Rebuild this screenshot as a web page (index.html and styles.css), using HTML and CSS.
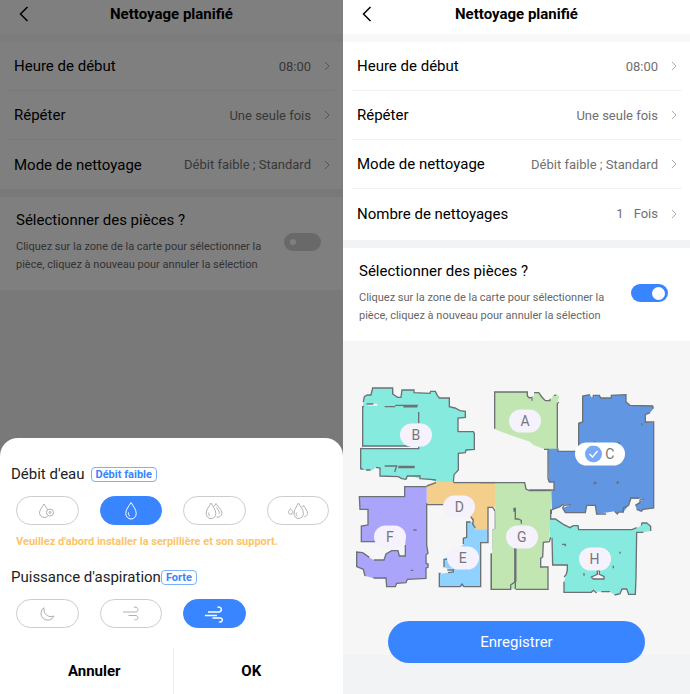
FILE: index.html
```html
<!DOCTYPE html>
<html lang="fr">
<head>
  <meta charset="UTF-8">
  <meta name="viewport" content="width=device-width, initial-scale=1.0">
  <title>Nettoyage planifié</title>
  <link rel="stylesheet" href="styles.css">
</head>
<body>

  <div class="screens">

    <!-- Schedule with the cleaning mode sheet open -->
    <section class="phone">
      <header class="topbar">
        <button class="back" aria-label="Retour">
          <svg width="10" height="16" viewBox="0 0 10 16"><path d="M8.500 1 1.500 8l7 7"/></svg>
        </button>
        <h1>Nettoyage planifié</h1>
      </header>

      <div class="list">
        <button class="row"><span class="name">Heure de début</span><span class="value">08:00</span><svg class="chevron" width="6" height="10" viewBox="0 0 6 10"><path d="m1 1 4 4-4 4"/></svg></button>
        <button class="row"><span class="name">Répéter</span><span class="value">Une seule fois</span><svg class="chevron" width="6" height="10" viewBox="0 0 6 10"><path d="m1 1 4 4-4 4"/></svg></button>
        <button class="row"><span class="name">Mode de nettoyage</span><span class="value">Débit faible ; Standard</span><svg class="chevron" width="6" height="10" viewBox="0 0 6 10"><path d="m1 1 4 4-4 4"/></svg></button>
      </div>

      <div class="select-rooms">
        <div class="select-text">
          <label for="rooms-off">Sélectionner des pièces ?</label>
          <p>Cliquez sur la zone de la carte pour sélectionner la pièce, cliquez à nouveau pour annuler la sélection</p>
        </div>
        <input type="checkbox" class="toggle" id="rooms-off">
      </div>

      <div class="overlay">
        <form class="sheet">
          <div class="sheet-title"><h2>Débit d'eau</h2><span class="badge spaced">Débit faible</span></div>
          <div class="options">
            <label class="option">
              <input type="radio" name="water" aria-label="Sans eau">
              <svg width="24" height="24" viewBox="0 0 24 24"><path d="M12.500 17.500A5 5 0 0 1 4.500 14c0-3 2.500-5.500 4.500-9 1.500 2.500 2.800 4.200 3.700 6"/><circle cx="15" cy="13.500" r="3.500"/><circle cx="15" cy="13.500" r="1"/></svg>
            </label>
            <label class="option">
              <input type="radio" name="water" aria-label="Débit faible" checked>
              <svg width="24" height="24" viewBox="0 0 24 24"><path d="M12 3.500c-2.500 4.200-5.200 7-5.200 11a5.200 5.500 0 0 0 10.400 0c0-4-2.700-6.800-5.200-11Z"/><path d="M9.500 13.500c-.3 1.800.2 3 1.500 3.800"/></svg>
            </label>
            <label class="option">
              <input type="radio" name="water" aria-label="Débit moyen">
              <svg width="24" height="24" viewBox="0 0 24 24"><path d="M9 4c-2 3.800-4.800 6.500-4.800 10.500a4.800 5.200 0 0 0 9.600 0C13.800 10.500 11 7.800 9 4Z"/><path d="M6.800 13.500c-.3 1.800.2 3 1.200 3.800M12 7.500 14 4.500c2 3.500 6 6.500 6 9.700a4.500 4.500 0 0 1-5.500 4M14.500 8.500c1.800 2.500 3 4 2.800 6.500"/></svg>
            </label>
            <label class="option">
              <input type="radio" name="water" aria-label="Débit fort">
              <svg width="24" height="24" viewBox="0 0 24 24"><path d="M12.500 4C10.500 7.800 8 10.500 8 14.500a4.700 5 0 0 0 9.400 0C17.400 10.500 14.500 7.800 12.500 4Z"/><path d="M10.300 13.500c-.3 1.800.2 3 1.200 3.800M4.500 9.500C3.500 11.200 2.500 12 2.500 13.500a2.200 2.200 0 0 0 4.300 0c0-1.500-1.200-2.500-2.300-4ZM16.500 8 17.500 6.500c1.600 2.800 4 5 4 7.700 0 2-1.500 3.300-3.200 3.300"/></svg>
            </label>
          </div>
          <p class="warning">Veuillez d'abord installer la serpillière et son support.</p>

          <div class="sheet-title"><h2>Puissance d'aspiration</h2><span class="badge">Forte</span></div>
          <div class="options">
            <label class="option">
              <input type="radio" name="power" aria-label="Silencieux">
              <svg width="24" height="24" viewBox="0 0 24 24"><path d="M9 5.700A6.800 6.800 0 1 0 19 14C13.500 16 8 12.500 9 5.700Z"/></svg>
            </label>
            <label class="option">
              <input type="radio" name="power" aria-label="Standard">
              <svg width="24" height="24" viewBox="0 0 24 24"><path d="M4 10h13a2.500 2.500 0 1 0-2-4.500M9.500 13.500H17a2.200 2.200 0 1 1-1.500 4"/></svg>
            </label>
            <label class="option strong">
              <input type="radio" name="power" aria-label="Forte" checked>
              <svg width="24" height="24" viewBox="0 0 24 24"><path d="M6 10h11.500a2.500 2.500 0 1 0-2-4.500M3 13.500h12M10.500 16h8a2 2 0 1 1-1.500 3.500"/></svg>
            </label>
          </div>

          <div class="actions">
            <button type="button">Annuler</button>
            <button type="button">OK</button>
          </div>
        </form>
      </div>
    </section>

    <!-- Schedule with room selection on -->
    <section class="phone">
      <header class="topbar">
        <button class="back" aria-label="Retour">
          <svg width="10" height="16" viewBox="0 0 10 16"><path d="M8.500 1 1.500 8l7 7"/></svg>
        </button>
        <h1>Nettoyage planifié</h1>
      </header>

      <div class="list full">
        <button class="row"><span class="name">Heure de début</span><span class="value">08:00</span><svg class="chevron" width="6" height="10" viewBox="0 0 6 10"><path d="m1 1 4 4-4 4"/></svg></button>
        <button class="row"><span class="name">Répéter</span><span class="value">Une seule fois</span><svg class="chevron" width="6" height="10" viewBox="0 0 6 10"><path d="m1 1 4 4-4 4"/></svg></button>
        <button class="row"><span class="name">Mode de nettoyage</span><span class="value">Débit faible ; Standard</span><svg class="chevron" width="6" height="10" viewBox="0 0 6 10"><path d="m1 1 4 4-4 4"/></svg></button>
        <button class="row"><span class="name">Nombre de nettoyages</span><span class="value count"><span>1</span><span>Fois</span></span><svg class="chevron" width="6" height="10" viewBox="0 0 6 10"><path d="m1 1 4 4-4 4"/></svg></button>
      </div>

      <div class="select-rooms">
        <div class="select-text">
          <label for="rooms-on">Sélectionner des pièces ?</label>
          <p>Cliquez sur la zone de la carte pour sélectionner la pièce, cliquez à nouveau pour annuler la sélection</p>
        </div>
        <input type="checkbox" class="toggle" id="rooms-on" checked>
      </div>

      <div class="map-area">
        <div class="map">
          <svg class="plan" viewBox="0 0 1041 636" aria-hidden="true">
            <!-- room B -->
            <g transform="translate(21 -18)">
              <path fill="#87eadf" d="M40 65 43 50 52 45H63L68 24H128L132 42 143 52H153L156 30H192V38L240 40 242 34H256L262 46 268 54H298V80L315 84 330 92 346 94V112L324 114V155H370L373 160V208L348 210 346 218 325 220V270L312 284 310 306H258L240 298 210 296 190 290 172 288 168 298 155 296 145 290 90 288V266L78 262 68 270H32V205L38 198V80Z"/>
              <path class="gap" d="M38 202H206M52 74H82"/>
              <path class="wall" d="M40 66 43 50 52 45H63L68 24H128V42L143 52H153L156 30H192V38L240 40 242 34H256L262 46 268 54H298V80L315 84 330 92 346 94V112L324 114V155H370L373 160V208L348 210 346 218 325 220V270L312 284 310 306M258 300 240 298 210 296V288H172L168 298 155 296 145 290 90 288V264L78 262M48 270H62M40 268 32 266V206H206V200M42 80H38V198H180M206 96V130M104 80H136M50 72H70M104 258H140L134 276M136 76H204"/>
              <path class="wall thick" d="M160 79H202M145 261H194"/>
            </g>
            <!-- rooms D, E, F -->
            <g transform="translate(21 252)">
              <path fill="#f4cf8b" d="M230 48 258 35H436V112H414V178H376L362 140 340 104H230Z"/>
              <path fill="#8fd2ff" d="M350 156H372L376 178H414V218L392 220V350H268V312L308 306V296H292L282 290V268L340 224V205L350 202Z"/>
              <path fill="#aaa4fb" d="M164 50H230V225L234 250 228 255 230 280 236 282 234 292 228 294V325L172 328 168 338 140 340 136 350H110L108 326 70 324 45 318 40 298 20 290V246L38 248 60 264 72 270H102L108 252 125 242H144L148 258H166V210L78 215H34V168L54 165V120L30 118 28 80H164Z"/>
              <path class="wall" d="M230 104H284M310 38H450M230 48 258 38M362 140 370 150 368 162 376 174M414 178V112H428L436 124V180H430V240M424 250V358H450M340 222V205L350 202V156H362M300 268H282V292M292 300H310V306L294 308M272 310H268V350H330L336 342 342 350H392V218H414V112"/>
              <path class="wall" d="M230 50H164V80H28L30 118H54V165L34 168V215H78M166 225V258H148L144 242H125L108 252 102 270H72M58 262 38 248 20 246V290L40 298 45 318M70 324H108L110 350H136L140 340 168 338 172 328 228 325V294L234 292V282L228 280V255L234 250 230 225V100M190 180H200M182 301H190"/>
            </g>
            <!-- room G -->
            <g transform="translate(411 267)">
              <path fill="#c1e6b1" d="M45 23H134L138 42 148 47 214 49V104L208 188 204 200 190 202 188 246 182 250V276L204 280V343H34V240L38 224V164L46 162Z"/>
              <path class="wall" d="M0 23H134L138 42 148 47H214M212 186 208 200 190 202 188 246 182 250V276H204V343H108M94 343H34V236M106 98V132H114L124 136V146M106 214V320L92 330V343M102 98V110M106 320V343"/>
              <path class="wall thick" d="M106 216V320"/>
              <!-- room H -->
              <path fill="#87eadf" d="M210 132H226L250 148 270 158 280 152H294L296 164H456L470 158 484 152 486 144H500L512 154V168L490 172 470 174 468 308 466 358H446L440 342H426L420 356 404 360 390 350H350L338 346 334 352H252V320L258 300 262 272 218 270 216 188 210 186Z"/>
              <path class="island" d="M334 306 352 298V286H358V298L372 304V312H340Z"/>
              <path class="wall" d="M212 104V132H226L250 148 270 158 280 152H294L296 164H456L470 158M484 152 486 144H500L512 154V168M490 172H470L468 308 466 358H446L440 342H426L420 356 404 360M390 350H364M350 354 340 346 334 352H252V320M252 306 258 300 262 286V270H218L216 188M246 208H256V214M312 294V302M400 272V280M420 230V236"/>
            </g>
            <!-- rooms A, C -->
            <g transform="translate(411 -18)">
              <path fill="#c1e6b1" d="M44 36H142L146 50 158 62 162 40 180 38 195 60 210 62 220 46 230 42 238 50 232 66 234 208H195L160 195 150 185 90 165 44 148Z"/>
              <path class="wall" d="M44 146V36H142V48L148 54 156 52V62M162 38H176L186 52 196 62H210V56M222 46H228M236 66 232 72V206"/>
              <path fill="#6096e2" d="M204 206H234V214H296V130L308 126V48L330 44 334 52 358 44 362 54H394V46L438 44V66L450 76 518 78 520 86 510 98 496 104V126L521 128V384L490 388 484 394 470 388 466 376 492 356H455L446 376 430 396 416 394 412 402 404 394 350 402 346 376H320L316 398H256L248 384 272 374H250L240 380 216 390 214 334 222 330V306H206Z"/>
              <path class="wall" d="M192 208H204V296L208 306H222V330H148M234 206V214H296V130L308 126V48L330 44M340 52V46H358L362 54H394V46L438 44V66L450 76 518 78 520 86M510 98 496 104V126H521V384L490 388 484 394 470 388M466 376 480 368V360L492 356M478 354H452L446 376 430 384V396H416L412 402 404 394M378 402H350L346 376H320L316 398H256L248 384 252 376 272 374M250 372 240 380 214 390V402M344 184V188M414 186 420 192M486 130V136"/>
              <path class="wall thick" d="M341 309H349M410 310 416 306"/>
            </g>
          </svg>
          <button class="room room-a" aria-pressed="false">A</button>
          <button class="room room-b" aria-pressed="false">B</button>
          <button class="room room-c" aria-pressed="true">
            <svg width="17" height="17" viewBox="0 0 17 17" aria-hidden="true"><circle cx="8.500" cy="8.500" r="8.500"/><path d="m4.500 8.500 3 3 5-6"/></svg>
            C
          </button>
          <button class="room room-d" aria-pressed="false">D</button>
          <button class="room room-e" aria-pressed="false">E</button>
          <button class="room room-f" aria-pressed="false">F</button>
          <button class="room room-g" aria-pressed="false">G</button>
          <button class="room room-h" aria-pressed="false">H</button>
        </div>
      </div>

      <div class="save-bar">
        <button class="save">Enregistrer</button>
      </div>
    </section>

  </div>

</body>
</html>
```
FILE: styles.css
```css
* {
  box-sizing: border-box;
}

body {
  margin: 0;
  font-family: Roboto, 'Liberation Sans', sans-serif;
  color: #000;
  background: #fff;
}

h1, h2, p {
  margin: 0;
}

button {
  font-family: inherit;
  color: inherit;
  background: none;
  border: none;
  padding: 0;
  cursor: pointer;
}

svg {
  display: block;
  fill: none;
}

.screens {
  display: grid;
  grid-template-columns: 343fr 347fr;
  min-height: 100vh;
}

.phone {
  position: relative;
  display: flex;
  flex-direction: column;
  min-width: 0;
  background: #f2f3f5;
}

/* Top bar */
.topbar {
  display: grid;
  grid-template-columns: 1fr auto 1fr;
  align-items: center;
  height: 34px;
  padding: 0 19px 7px;
  background: #fff;
}

.topbar h1 {
  font-size: 15px;
  line-height: 20px;
  font-weight: bold;
}

.back {
  justify-self: start;
}

.back svg {
  stroke: #000;
  stroke-width: 1.5;
}

/* Settings rows */
.list {
  padding: 0 8px;
  background: #fff;
  border-top: 8px solid #f8f8f8;
  border-bottom: 8px solid #f2f3f5;
}

.full {
  padding-bottom: 2px;
}

.row {
  display: flex;
  align-items: center;
  width: 100%;
  height: 49px;
  padding: 0 5px 0 6px;
  border-bottom: 1px solid #f3f3f3;
}

.row:last-child {
  border-bottom: none;
}

.name {
  margin-right: auto;
  font-size: 15px;
}

.value {
  font-size: 13px;
  color: #707070;
}

.count {
  display: flex;
  gap: 10px;
}

.chevron {
  margin-left: 13px;
  stroke: #aaa;
}

/* Room selection */
.select-rooms {
  display: flex;
  align-items: center;
  justify-content: space-between;
  gap: 16px;
  padding: 13px 22px 16px 16px;
  background: #fff;
}

.select-text label {
  display: block;
  margin-bottom: 8px;
  font-size: 15px;
  line-height: 20px;
}

.select-text p {
  font-size: 11px;
  line-height: 18px;
  color: #666;
}

.toggle {
  appearance: none;
  display: flex;
  flex: none;
  align-items: center;
  width: 37px;
  height: 18px;
  margin: 0;
  padding: 0 6px;
  border-radius: 9px;
  background: #d2d2d2;
  cursor: pointer;
}

.toggle::before {
  content: "";
  width: 6px;
  height: 6px;
  border-radius: 50%;
  background: #fff;
}

.toggle:checked {
  justify-content: flex-end;
  padding: 0 3px;
  background: #3985ff;
}

.toggle:checked::before {
  width: 13px;
  height: 13px;
}

/* Bottom sheet */
.overlay {
  position: absolute;
  inset: 0;
  display: flex;
  flex-direction: column;
  justify-content: flex-end;
  background: rgba(0, 0, 0, 0.5);
}

.sheet {
  padding: 26px 14px 0 16px;
  border-radius: 18px 18px 0 0;
  background: #fff;
}

.sheet-title {
  display: flex;
  align-items: center;
  height: 20px;
  margin-left: -5px;
}

.sheet-title h2 {
  font-size: 15px;
  font-weight: normal;
  color: #222;
}

.badge {
  padding: 0 4px;
  border: 1px solid #7db0ff;
  border-radius: 4px;
  font-size: 11px;
  line-height: 13px;
  font-weight: bold;
  color: #3985ff;
}

.spaced {
  margin-left: 6px;
}

.options {
  display: grid;
  grid-template-columns: repeat(4, 1fr);
  gap: 21px;
  margin-top: 12px;
}

.option {
  display: grid;
  place-items: center;
  height: 29px;
  cursor: pointer;
}

.option input {
  appearance: none;
  grid-area: 1 / 1;
  width: 100%;
  height: 100%;
  margin: 0;
  border: 1px solid #ccc;
  border-radius: 15px;
}

.option svg {
  grid-area: 1 / 1;
  stroke: #b0b0b0;
  pointer-events: none;
}

.option input:checked {
  border-color: #3985ff;
  background: #3985ff;
}

.option input:checked + svg {
  stroke: #fff;
}

.strong svg {
  stroke-width: 1.5;
}

.warning {
  margin: 7px 0 15px;
  font-size: 11px;
  line-height: 20px;
  font-weight: bold;
  color: #fdc467;
}

.actions {
  display: grid;
  grid-template-columns: 1fr 1fr;
  margin-top: 20px;
}

.actions button {
  height: 46px;
  font-size: 15px;
  font-weight: bold;
}

.actions button + button {
  border-left: 1px solid #eee;
}

/* Map */
.map-area {
  padding-top: 45px;
  background: #f6f6f6;
}

.map {
  position: relative;
}

.plan {
  width: 100%;
  height: auto;
}

.wall {
  stroke: #6c7177;
  stroke-width: 4;
}

.thick {
  stroke-width: 7;
}

.gap {
  stroke: #f6f6f6;
  stroke-width: 6;
}

.island {
  fill: #f6f6f6;
  stroke: #6c7177;
  stroke-width: 4;
}

.room {
  position: absolute;
  display: flex;
  align-items: center;
  justify-content: center;
  gap: 3px;
  width: 32px;
  height: 23px;
  border-radius: 12px;
  background: #f5f1fd;
  font-size: 14px;
  color: #777;
  transform: translate(-50%, -50%);
}

.room[aria-pressed="true"] {
  width: 50px;
  background: #fff;
}

.room circle {
  fill: #77a9f8;
}

.room path {
  stroke: #fff;
  stroke-width: 1.5;
}

.room-a { left: 52.5%; top: 16.5%; }
.room-b { left: 21%; top: 23%; }
.room-c { left: 74%; top: 32%; }
.room-d { left: 33.5%; top: 57%; }
.room-e { left: 34.5%; top: 81%; }
.room-f { left: 13.5%; top: 71%; }
.room-g { left: 51.5%; top: 71%; }
.room-h { left: 72.5%; top: 81.5%; }

/* Save */
.save-bar {
  flex: 1;
  padding: 23px 45px 30px;
  background: linear-gradient(#f6f6f6 57px, #f2f3f5 57px);
}

.save {
  width: 100%;
  height: 42px;
  border-radius: 21px;
  background: #3985ff;
  font-size: 15px;
  color: #fff;
}
```
